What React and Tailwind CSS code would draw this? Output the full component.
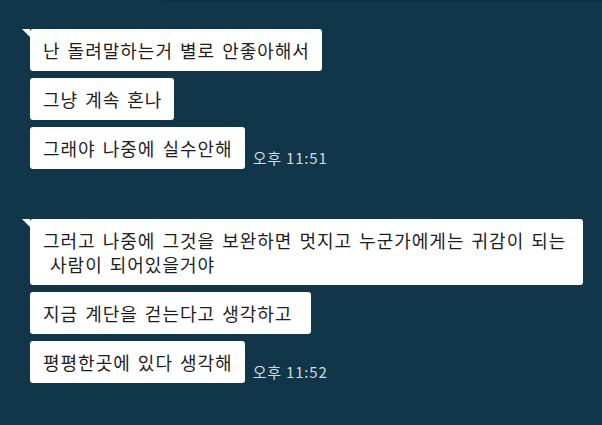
const groups = [
  {
    time: '오후 11:51',
    messages: [['난 돌려말하는거 별로 안좋아해서'], ['그냥 계속 혼나'], ['그래야 나중에 실수안해']],
  },
  {
    time: '오후 11:52',
    messages: [
      ['그러고 나중에 그것을 보완하면 멋지고 누군가에게는 귀감이 되는', ' 사람이 되어있을거야'],
      ['지금 계단을 걷는다고 생각하고 '],
      ['평평한곳에 있다 생각해'],
    ],
  },
];

function Bubble({ lines, tail }) {
  const wrapped = lines.length > 1;
  return (
    <div
      className={`relative rounded-[3px] bg-white py-[9px] pl-[13px] pr-[12px] text-[18px] leading-[24px] tracking-[1px] text-[#1e1e1e] [word-spacing:2px] ${
        wrapped ? 'w-[553px]' : ''
      }`}
    >
      {tail && (
        <span className="absolute -left-[8px] top-0 h-0 w-0 border-t-[8px] border-l-[8px] border-t-white border-l-transparent" />
      )}
      {lines.map((line, i) => (
        <div key={i} className="whitespace-pre">
          {line}
        </div>
      ))}
    </div>
  );
}

export default function App() {
  return (
    <div
      className="flex h-[425px] w-[602px] flex-col overflow-hidden bg-[#11364a]"
      style={{ fontFamily: '"Noto Sans CJK KR", "Noto Sans", sans-serif' }}
    >
      <div className="ml-[166px] h-[2px] bg-gradient-to-b from-[#0c2b3c] to-[#11364a]" />
      <div className="flex flex-col gap-[50px] pl-[30px] pt-[27px]">
        {groups.map((group, g) => (
          <div key={g} className="flex flex-col items-start gap-[7px]">
            {group.messages.map((lines, i) => {
              const last = i === group.messages.length - 1;
              return (
                <div key={i} className="flex items-end gap-[8px]">
                  <Bubble lines={lines} tail={i === 0} />
                  {last && (
                    <span className="pb-[2px] text-[15px] leading-[18px] tracking-[0.8px] text-[#d3dadf]">
                      {group.time}
                    </span>
                  )}
                </div>
              );
            })}
          </div>
        ))}
      </div>
    </div>
  );
}
